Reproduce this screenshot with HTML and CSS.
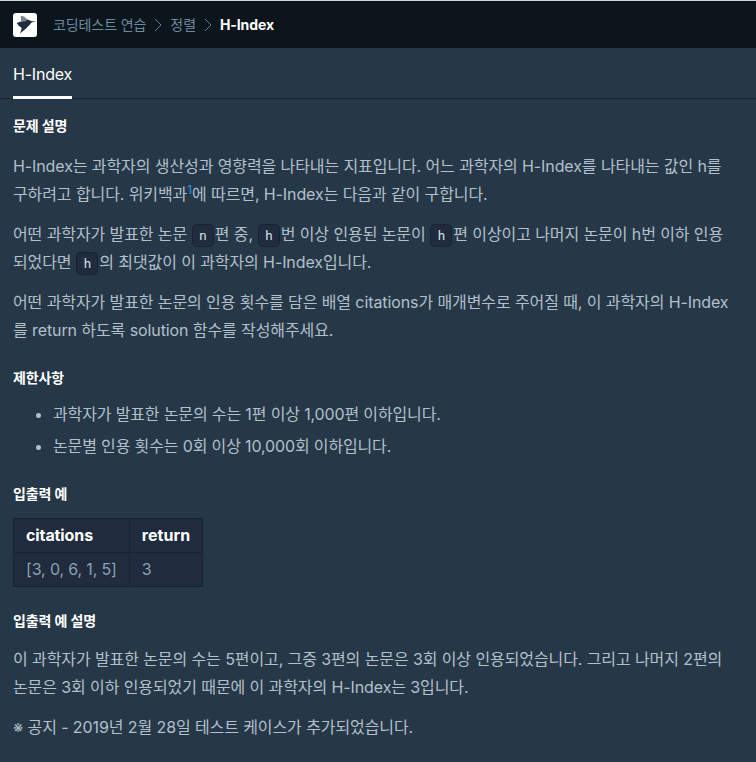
FILE: index.html
```
<!DOCTYPE html>
<html lang="ko">
<head>
<meta charset="utf-8">
<title>H-Index</title>
<link rel="stylesheet" href="styles.css">
</head>
<body>
<header class="topbar">
  <span class="logo">
    <svg width="24" height="24" viewBox="0 0 24 24"><path class="bird" d="M3.7 10 L8 8.5 L14.5 6.5 L17 7.4 L19 8.2 L23 8.6 L18.5 9.4 L16.5 12 L13 15.5 L7 20.5 L8.8 15 L5.5 12.5 Z"/><path class="wing" d="M7.7 2.7 L11 3.6 L14.5 6.5 L12 8.6 L8 8.5 Z"/></svg>
  </span>
  <nav class="crumbs">
    <span>코딩테스트 연습</span>
    <svg class="chev" width="8" height="14" viewBox="0 0 8 14"><path d="M1 1l6 6-6 6"/></svg>
    <span>정렬</span>
    <svg class="chev" width="8" height="14" viewBox="0 0 8 14"><path d="M1 1l6 6-6 6"/></svg>
    <strong>H-Index</strong>
  </nav>
</header>
<div class="tabs"><div class="tab">H-Index</div></div>
<main class="content">
  <h6>문제 설명</h6>
  <p>H-Index는 과학자의 생산성과 영향력을 나타내는 지표입니다. 어느 과학자의 H-Index를 나타내는 값인 h를 구하려고 합니다. 위키백과<sup class="ref">1</sup>에 따르면, H-Index는 다음과 같이 구합니다.</p>
  <p>어떤 과학자가 발표한 논문 <code>n</code>편 중, <code>h</code>번 이상 인용된 논문이 <code>h</code>편 이상이고 나머지 논문이 h번 이하 인용<br>되었다면 <code>h</code>의 최댓값이 이 과학자의 H-Index입니다.</p>
  <p>어떤 과학자가 발표한 논문의 인용 횟수를 담은 배열 citations가 매개변수로 주어질 때, 이 과학자의 H-Index<br>를 return 하도록 solution 함수를 작성해주세요.</p>
  <h5>제한사항</h5>
  <ul>
    <li>과학자가 발표한 논문의 수는 1편 이상 1,000편 이하입니다.</li>
    <li>논문별 인용 횟수는 0회 이상 10,000회 이하입니다.</li>
  </ul>
  <h5>입출력 예</h5>
  <table>
    <thead><tr><th>citations</th><th class="ret">return</th></tr></thead>
    <tbody><tr><td>[3, 0, 6, 1, 5]</td><td>3</td></tr></tbody>
  </table>
  <h5>입출력 예 설명</h5>
  <p>이 과학자가 발표한 논문의 수는 5편이고, 그중 3편의 논문은 3회 이상 인용되었습니다. 그리고 나머지 2편의 논문은 3회 이하 인용되었기 때문에 이 과학자의 H-Index는 3입니다.</p>
  <p>※ 공지 - 2019년 2월 28일 테스트 케이스가 추가되었습니다.</p>
</main>
</body>
</html>
```
FILE: styles.css
```
* { box-sizing: border-box; }
html, body { margin: 0; height: 100%; }
body {
  background: #263747;
  color: #b2c0cc;
  font-family: Inter, "Noto Sans CJK KR", sans-serif;
  font-size: 16px;
  line-height: 28px;
  letter-spacing: -0.006em;
  overflow: hidden;
}
.topbar {
  height: 48px;
  background: #0c151c;
  border-top: 1px solid #d0d4d8;
  display: flex;
  align-items: center;
  padding-left: 13px;
}
.logo {
  width: 24px;
  height: 24px;
  background: #fff;
  border-radius: 3px;
  display: block;
}
.logo svg { display: block; }
.bird { fill: #1e2c3c; }
.wing { fill: #7d8791; }
.crumbs {
  margin-left: 16px;
  display: flex;
  align-items: center;
  font-size: 14px;
  line-height: 20px;
  color: #6c8ba0;
}
.crumbs strong { color: #fff; font-weight: 700; }
.chev { margin: 0 8px; fill: none; stroke: #5f7f90; stroke-width: 1; }
.tabs {
  height: 51px;
  border-bottom: 1px solid #172334;
  padding-left: 13px;
}
.tab {
  display: inline-block;
  height: 51px;
  padding-top: 12px;
  color: #fff;
  font-size: 16px;
  line-height: 28px;
  letter-spacing: -0.012em;
  border-bottom: 3px solid #fff;
}
.content { padding: 15px 0 0 13px; word-break: keep-all; }
h5, h6 {
  margin: 0 0 12px;
  color: #fff;
  font-size: 14px;
  line-height: 24px;
  font-weight: 700;
}
h6 { margin-bottom: 14px; }
h5 { margin-top: 22px; }
p { margin: 0 0 12px; }
.ref { color: #2196f3; font-size: 12px; line-height: 0; }
code {
  font-family: "DejaVu Sans Mono", monospace;
  font-size: 13px;
  line-height: 1;
  letter-spacing: 0;
  padding: 3px 6px;
  margin: 0 1px 0 0.5px;
  color: #d7e2eb;
  background: #202b3d;
  border: 1px solid #172334;
  border-radius: 5px;
}
ul { margin: -2px 0 0; padding: 0 0 0 40px; letter-spacing: -0.009em; }
li { margin-bottom: 4px; }
li:last-child { margin-bottom: 0; }
table { border-collapse: collapse; }
th, td {
  border: 1px solid #172334;
  background: #202b3d;
  padding: 2px 12px 3px;
  text-align: left;
}
th { color: #fff; font-weight: 700; }
th.ret { letter-spacing: 0.004em; }
td { color: #8aa2b4; letter-spacing: -0.009em; }
```
